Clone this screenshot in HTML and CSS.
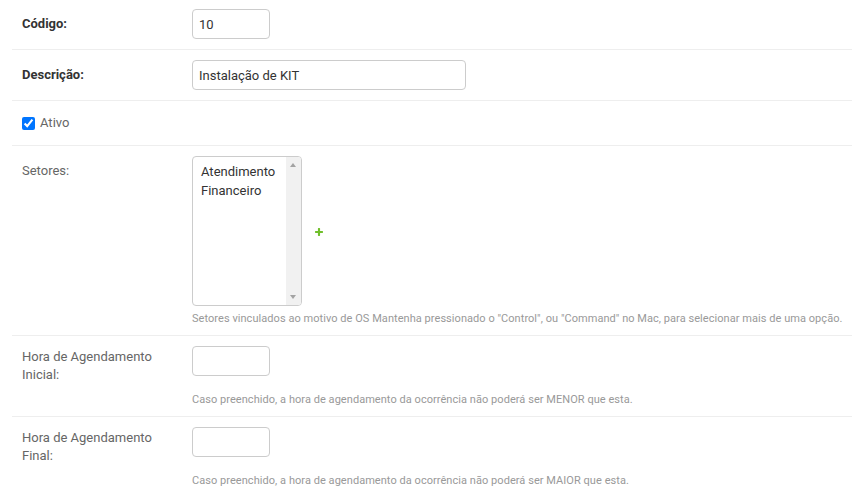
FILE: index.html
```html
<!DOCTYPE html>
<html lang="pt-br">
<head>
  <meta charset="UTF-8">
  <title>Motivo de OS</title>
  <link rel="stylesheet" href="styles.css">
</head>
<body>
  <form class="aligned">
    <fieldset class="module">
      <div class="form-row first">
        <label class="required" for="id_codigo">Código:</label>
        <div class="field">
          <input type="text" id="id_codigo" class="vIntegerField" value="10">
        </div>
      </div>

      <div class="form-row">
        <label class="required" for="id_descricao">Descrição:</label>
        <div class="field">
          <input type="text" id="id_descricao" class="vTextField" value="Instalação de KIT">
        </div>
      </div>

      <div class="form-row">
        <div class="checkbox-row">
          <input type="checkbox" id="id_ativo" checked>
          <label class="vCheckboxLabel" for="id_ativo">Ativo</label>
        </div>
      </div>

      <div class="form-row">
        <label for="id_setores">Setores:</label>
        <div class="related-widget-wrapper">
          <div class="select-box">
            <select id="id_setores" multiple>
              <option value="1">Atendimento</option>
              <option value="2">Financeiro</option>
            </select>
            <!-- scrollbar drawn by hand, the headless browser hides the native one -->
            <span class="scrollbar" aria-hidden="true">
              <span class="arrow up"></span>
              <span class="arrow down"></span>
            </span>
          </div>
          <a class="add-related" href="#" title="Adicionar outro(a) Setor">
            <svg width="10" height="10" viewBox="0 0 1792 1792"><path fill="#70bf2b" d="M1600 796v192q0 40-28 68t-68 28h-416v416q0 40-28 68t-68 28h-192q-40 0-68-28t-28-68v-416h-416q-40 0-68-28t-28-68v-192q0-40 28-68t68-28h416v-416q0-40 28-68t68-28h192q40 0 68 28t28 68v416h416q40 0 68 28t28 68z"/></svg>
          </a>
        </div>
        <p class="help">Setores vinculados ao motivo de OS Mantenha pressionado o "Control", ou "Command" no Mac, para selecionar mais de uma opção.</p>
      </div>

      <div class="form-row time">
        <label for="id_hora_inicial">Hora de Agendamento Inicial:</label>
        <div class="field">
          <input type="text" id="id_hora_inicial" class="vTimeField">
        </div>
        <p class="help">Caso preenchido, a hora de agendamento da ocorrência não poderá ser MENOR que esta.</p>
      </div>

      <div class="form-row time">
        <label for="id_hora_final">Hora de Agendamento Final:</label>
        <div class="field">
          <input type="text" id="id_hora_final" class="vTimeField">
        </div>
        <p class="help">Caso preenchido, a hora de agendamento da ocorrência não poderá ser MAIOR que esta.</p>
      </div>
    </fieldset>
  </form>
</body>
</html>
```

FILE: styles.css
```css
body {
  margin: 0;
  padding: 0 0 0 12px;
  font-family: Roboto, "Lucida Grande", Verdana, Arial, sans-serif;
  font-size: 13px;
  color: #333;
  background: #fff;
}
fieldset {
  margin: 0;
  padding: 0;
  border: none;
}
.form-row {
  display: grid;
  grid-template-columns: 170px minmax(0, 1fr);
  row-gap: 6px;
  padding: 10px;
  border-bottom: 1px solid #eee;
}
.form-row.first {
  padding-top: 9px;
}
label {
  display: block;
  padding: 6px 10px 0 0;
  line-height: 18px;
  font-size: 13px;
  color: #666;
}
.form-row.time label {
  padding: 2px 10px 3px 0;
}
label.required {
  font-weight: bold;
  color: #333;
}
input[type=text],
select {
  box-sizing: border-box;
  font-family: Roboto, "Lucida Grande", Verdana, Arial, sans-serif;
  font-size: 13px;
  color: #333;
  border: 1px solid #ccc;
  border-radius: 4px;
  background: #fff;
  margin: 0;
}
input[type=text] {
  height: 30px;
  padding: 5px 6px;
}
.vIntegerField,
.vTimeField {
  width: 78px;
}
.vTextField {
  width: 274px;
}
.checkbox-row {
  grid-column: 1 / 3;
  display: flex;
  align-items: center;
  height: 24px;
}
.checkbox-row input {
  margin: 0 5px 0 0;
  width: 13px;
  height: 13px;
}
.vCheckboxLabel {
  display: inline;
  padding: 0;
}
.related-widget-wrapper {
  display: flex;
  align-items: center;
  gap: 12px;
}
.select-box {
  position: relative;
  width: 110px;
  height: 150px;
}
.select-box select {
  display: block;
  width: 110px;
  height: 150px;
  padding: 6px 20px 5px 6px;
  overflow: hidden;
}
.select-box option {
  padding: 1px 2px 2px;
}
.scrollbar {
  position: absolute;
  top: 1px;
  right: 1px;
  bottom: 1px;
  width: 15px;
  background: #f1f1f1;
  border-radius: 0 3px 3px 0;
}
.arrow {
  position: absolute;
  left: 4px;
  width: 0;
  height: 0;
  border-left: 3.5px solid transparent;
  border-right: 3.5px solid transparent;
}
.arrow.up {
  top: 6px;
  border-bottom: 4px solid #a3a3a3;
}
.arrow.down {
  bottom: 6px;
  border-top: 4px solid #a3a3a3;
}
.add-related {
  display: block;
  height: 10px;
  margin-top: 2px;
}
.add-related svg {
  display: block;
}
.help {
  grid-column: 2;
  margin: 0;
  font-size: 11px;
  line-height: 13px;
  letter-spacing: 0.05px;
  white-space: nowrap;
  color: #999;
}
```
